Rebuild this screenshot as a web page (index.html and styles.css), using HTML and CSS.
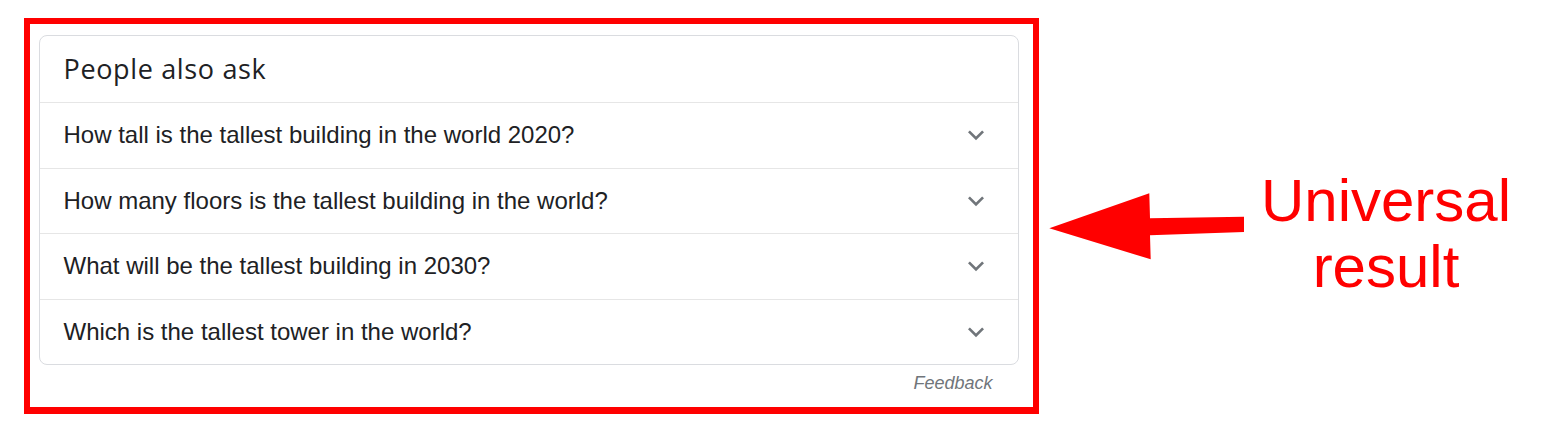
FILE: index.html
```html
<!DOCTYPE html>
<html lang="en">
<head>
<meta charset="utf-8">
<title>People also ask</title>
<link rel="stylesheet" href="styles.css">
</head>
<body>
<div class="page">
  <div class="frame">
    <div class="card">
      <div class="card-head">People also ask</div>
      <div class="row"><span class="q">How tall is the tallest building in the world 2020?</span><svg class="chev" viewBox="0 0 24 24"><path d="M16.59 8.59L12 13.17 7.41 8.59 6 10l6 6 6-6z"/></svg></div>
      <div class="row"><span class="q">How many floors is the tallest building in the world?</span><svg class="chev" viewBox="0 0 24 24"><path d="M16.59 8.59L12 13.17 7.41 8.59 6 10l6 6 6-6z"/></svg></div>
      <div class="row"><span class="q">What will be the tallest building in 2030?</span><svg class="chev" viewBox="0 0 24 24"><path d="M16.59 8.59L12 13.17 7.41 8.59 6 10l6 6 6-6z"/></svg></div>
      <div class="row"><span class="q">Which is the tallest tower in the world?</span><svg class="chev" viewBox="0 0 24 24"><path d="M16.59 8.59L12 13.17 7.41 8.59 6 10l6 6 6-6z"/></svg></div>
    </div>
    <div class="feedback">Feedback</div>
  </div>
  <svg class="arrow" width="196" height="68" viewBox="0 0 196 68"><polygon points="1.3,36.3 101.3,1.3 102,26.3 196,24.7 196,40 102,43.3 102.7,67.3"/></svg>
  <div class="label">Universal<br>result</div>
</div>
</body>
</html>
```

FILE: styles.css
```css
html, body {
  margin: 0;
  padding: 0;
  background: #ffffff;
}
.page {
  display: flex;
  align-items: flex-start;
  padding: 18px 0 0 24px;
}
.frame {
  box-sizing: border-box;
  width: 1015px;
  height: 396px;
  border: 6px solid #ff0000;
  border-bottom-width: 7px;
  padding: 11px 14.5px 0 8.5px;
  flex-shrink: 0;
}
.card {
  border: 1px solid #dadce0;
  border-radius: 8px;
  background: #fff;
}
.card-head {
  font-family: "Open Sans", Roboto, sans-serif;
  font-size: 27px;
  line-height: 32px;
  letter-spacing: 0.65px;
  color: #202124;
  padding: 17px 24px;
}
.row {
  display: flex;
  align-items: center;
  justify-content: space-between;
  height: 64.5px;
  border-top: 1px solid #e6e6e6;
  padding: 0 26px 0 24px;
}
.q {
  font-family: "Liberation Sans", Arial, sans-serif;
  font-size: 24px;
  line-height: 32px;
  color: #202124;
}
.chev {
  width: 32px;
  height: 32px;
  fill: #70757a;
  flex-shrink: 0;
}
.feedback {
  font-family: "Liberation Sans", Arial, sans-serif;
  font-style: italic;
  font-size: 18px;
  line-height: 24px;
  color: #70757a;
  text-align: right;
  padding: 6px 26px 0 0;
}
.arrow {
  flex-shrink: 0;
  margin: 174px 0 0 9px;
  fill: #ff0000;
}
.label {
  flex-shrink: 0;
  width: 260px;
  margin: 150px 0 0 12px;
  font-family: "Liberation Sans", Arial, sans-serif;
  font-size: 60px;
  line-height: 66px;
  color: #ff0000;
  text-align: center;
}
```
